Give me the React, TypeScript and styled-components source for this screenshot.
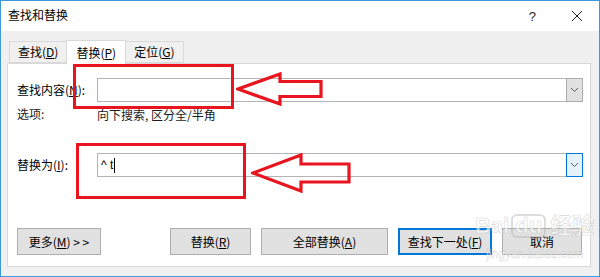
import styled, { createGlobalStyle } from 'styled-components'

const GlobalStyle = createGlobalStyle`
  html, body {
    margin: 0;
    padding: 0;
    background: #ffffff;
  }
  * {
    box-sizing: border-box;
  }
`

const Chevron = () => (
  <svg width='9' height='6' viewBox='0 0 9 6'>
    <path d='M1 1 L4.5 4.5 L8 1' fill='none' stroke='#5a5a5a' strokeWidth='1' />
  </svg>
)

const CloseIcon = () => (
  <svg width='12' height='12' viewBox='0 0 12 12'>
    <path d='M1 1 L11 11 M11 1 L1 11' stroke='#222' strokeWidth='1' />
  </svg>
)

const Arrow = ({ x, y, w, h, shaft }: { x: number; y: number; w: number; h: number; shaft: number }) => {
  // outlined arrow pointing left, head takes about half the width
  const head = Math.round(w * 0.5)
  const top = (h - shaft) / 2
  const d = `M2 ${h / 2} L${head} 2 L${head} ${top} L${w - 2} ${top} L${w - 2} ${top + shaft} L${head} ${top + shaft} L${head} ${h - 2} Z`
  return (
    <ARROW style={{ left: x, top: y }} width={w} height={h} viewBox={`0 0 ${w} ${h}`}>
      <path d={d} fill='none' stroke='#e8141e' strokeWidth='3.2' strokeLinejoin='miter' />
    </ARROW>
  )
}

const App = () => {
  return (
    <>
      <GlobalStyle />
      <WINDOW>
        <TITLE_BAR>
          <TITLE>查找和替换</TITLE>
          <TITLE_BUTTONS>
            <HELP>?</HELP>
            <CloseIcon />
          </TITLE_BUTTONS>
        </TITLE_BAR>
        <BODY>
          <TABS>
            <TAB>
              查找(<u>D</u>)
            </TAB>
            <TAB $active>
              替换(<u>P</u>)
            </TAB>
            <TAB>
              定位(<u>G</u>)
            </TAB>
          </TABS>
          <PANEL>
            <ROW>
              <LABEL>
                查找内容(<u>N</u>):
              </LABEL>
              <COMBO>
                <COMBO_TEXT />
                <DROP_BUTTON>
                  <Chevron />
                </DROP_BUTTON>
              </COMBO>
            </ROW>
            <OPTIONS_ROW>
              <LABEL>选项:</LABEL>
              <span>向下搜索, 区分全/半角</span>
            </OPTIONS_ROW>
            <REPLACE_ROW>
              <LABEL>
                替换为(<u>I</u>):
              </LABEL>
              <COMBO>
                <COMBO_TEXT>
                  ^ t<CARET />
                </COMBO_TEXT>
                <DROP_BUTTON $focus>
                  <Chevron />
                </DROP_BUTTON>
              </COMBO>
            </REPLACE_ROW>
            <BUTTON_ROW>
              <BUTTON $w={84}>
                更多(<u>M</u>) &gt; &gt;
              </BUTTON>
              <BUTTON $w={81} style={{ marginLeft: 'auto' }}>
                替换(<u>R</u>)
              </BUTTON>
              <BUTTON $w={127}>
                全部替换(<u>A</u>)
              </BUTTON>
              <BUTTON $w={94} $default>
                查找下一处(<u>F</u>)
              </BUTTON>
              <BUTTON $w={80}>取消</BUTTON>
            </BUTTON_ROW>
          </PANEL>
        </BODY>

        <RED_BOX style={{ left: 72, top: 63, width: 161, height: 45 }} />
        <RED_BOX style={{ left: 75, top: 142, width: 170, height: 56 }} />
        <Arrow x={235} y={71} w={87} h={34} shaft={15} />
        <Arrow x={250} y={152} w={100} h={40} shaft={18} />

        <WATERMARK>
          <MARK_BIG>
            Bai<MARK_DU>du</MARK_DU>经验
          </MARK_BIG>
          <MARK_SMALL>jingyan.baidu.com</MARK_SMALL>
        </WATERMARK>
      </WINDOW>
    </>
  )
}

export default App

const WINDOW = styled.div`
  position: relative;
  width: 600px;
  height: 277px;
  border: 1px solid #3d98dd;
  display: flex;
  flex-direction: column;
  font-family: 'Noto Sans CJK SC', 'Noto Sans', sans-serif;
  font-size: 12px;
  color: #000;
  overflow: hidden;
`

const TITLE_BAR = styled.div`
  height: 30px;
  background: #ffffff;
  display: flex;
  align-items: center;
  justify-content: space-between;
  padding: 0 16px 0 7px;
`

const TITLE = styled.div`
  font-size: 12px;
  line-height: 16px;
  padding-bottom: 2px;
`

const TITLE_BUTTONS = styled.div`
  display: flex;
  align-items: center;
  gap: 35px;
`

const HELP = styled.span`
  font-family: 'Liberation Sans', sans-serif;
  font-size: 13px;
  color: #222;
`

const BODY = styled.div`
  flex: 1;
  background: #f0f0f0;
  padding: 8px 6px 0 6px;
  display: flex;
  flex-direction: column;
`

const TABS = styled.div`
  display: flex;
  align-items: flex-end;
  padding-left: 2px;
  height: 24px;
  position: relative;
  z-index: 1;
`

const TAB = styled.div<{ $active?: boolean }>`
  height: ${(p) => (p.$active ? '24px' : '22px')};
  padding: 0 ${(p) => (p.$active ? '9px' : '8px')};
  margin-bottom: ${(p) => (p.$active ? '-1px' : '0')};
  background: ${(p) => (p.$active ? '#ffffff' : '#f0f0f0')};
  border: 1px solid #d9d9d9;
  border-bottom: ${(p) => (p.$active ? 'none' : '1px solid #d9d9d9')};
  margin-left: ${(p) => (p.$active ? '-1px' : '0')};
  margin-right: ${(p) => (p.$active ? '-1px' : '0')};
  display: flex;
  align-items: center;
  font-size: 12px;
  line-height: 16px;
  position: relative;
  z-index: ${(p) => (p.$active ? 2 : 0)};
`

const PANEL = styled.div`
  width: 584px;
  height: 204px;
  background: #ffffff;
  border: 1px solid #d9d9d9;
  padding: 14px 7px 0 9px;
  display: flex;
  flex-direction: column;
`

const ROW = styled.div`
  display: flex;
  align-items: center;
  height: 24px;
`

const OPTIONS_ROW = styled.div`
  display: flex;
  align-items: center;
  height: 16px;
  margin-top: 4px;
  color: #1a1a1a;
`

const REPLACE_ROW = styled(ROW)`
  margin-top: 31px;
`

const LABEL = styled.div`
  width: 80px;
  flex-shrink: 0;
  line-height: 16px;
`

const COMBO = styled.div`
  flex: 1;
  height: 24px;
  border: 1px solid #b4b4b4;
  background: #ffffff;
  display: flex;
  align-items: stretch;
`

const COMBO_TEXT = styled.div`
  flex: 1;
  display: flex;
  align-items: center;
  padding-left: 3px;
  font-family: 'Liberation Sans', 'Noto Sans CJK SC', sans-serif;
  font-size: 12px;
  white-space: pre;
`

const CARET = styled.span`
  display: inline-block;
  width: 1px;
  height: 15px;
  background: #000;
  margin-left: 1px;
`

const DROP_BUTTON = styled.div<{ $focus?: boolean }>`
  width: 17px;
  margin: -1px -1px -1px 0;
  background: ${(p) => (p.$focus ? '#e5f1fb' : '#e1e1e1')};
  border: 1px solid ${(p) => (p.$focus ? '#0078d7' : '#adadad')};
  display: grid;
  place-items: center;
`

const BUTTON_ROW = styled.div`
  display: flex;
  gap: 10px;
  margin-top: 51px;
  padding-right: 1px;
`

const BUTTON = styled.div<{ $w: number; $default?: boolean }>`
  width: ${(p) => p.$w}px;
  height: 27px;
  background: #e1e1e1;
  border: 1px solid ${(p) => (p.$default ? '#0078d7' : '#adadad')};
  box-shadow: ${(p) => (p.$default ? 'inset 0 0 0 1px #0078d7' : 'none')};
  display: flex;
  align-items: center;
  justify-content: center;
  font-size: 12px;
  line-height: 16px;
  white-space: pre;
`

const RED_BOX = styled.div`
  position: absolute;
  border: 3.5px solid #e8141e;
  pointer-events: none;
`

const ARROW = styled.svg`
  position: absolute;
  pointer-events: none;
`

const WATERMARK = styled.div`
  position: absolute;
  left: 474px;
  top: 212px;
  display: flex;
  flex-direction: column;
  align-items: center;
  color: rgba(255, 255, 255, 0.6);
  -webkit-text-stroke: 0.6px rgba(170, 170, 170, 0.5);
  pointer-events: none;
`

const MARK_BIG = styled.div`
  font-family: 'Liberation Sans', 'Noto Sans CJK SC', sans-serif;
  font-size: 22px;
  font-weight: bold;
  line-height: 26px;
  display: flex;
  align-items: center;
`

const MARK_DU = styled.span`
  border: 2px solid rgba(180, 180, 180, 0.45);
  border-radius: 6px;
  padding: 0 2px;
  margin: 0 4px 0 2px;
  line-height: 20px;
`

const MARK_SMALL = styled.div`
  font-family: 'Liberation Sans', sans-serif;
  font-size: 12px;
  line-height: 14px;
  margin-top: 8px;
  -webkit-text-stroke: 0.4px rgba(170, 170, 170, 0.5);
`
